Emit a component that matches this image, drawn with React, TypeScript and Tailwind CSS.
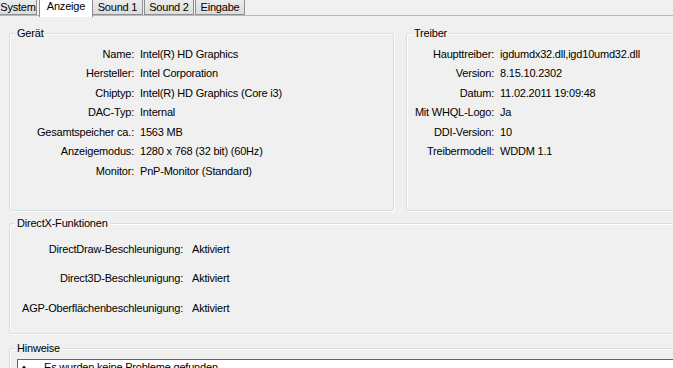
import React from "react";

const font = { fontFamily: '"Liberation Sans", Arial, sans-serif' };

const tabs = ["System", "Anzeige", "Sound 1", "Sound 2", "Eingabe"];

const deviceRows: [string, string][] = [
  ["Name:", "Intel(R) HD Graphics"],
  ["Hersteller:", "Intel Corporation"],
  ["Chiptyp:", "Intel(R) HD Graphics (Core i3)"],
  ["DAC-Typ:", "Internal"],
  ["Gesamtspeicher ca.:", "1563 MB"],
  ["Anzeigemodus:", "1280 x 768 (32 bit) (60Hz)"],
  ["Monitor:", "PnP-Monitor (Standard)"],
];

const driverRows: [string, string][] = [
  ["Haupttreiber:", "igdumdx32.dll,igd10umd32.dll"],
  ["Version:", "8.15.10.2302"],
  ["Datum:", "11.02.2011 19:09:48"],
  ["Mit WHQL-Logo:", "Ja"],
  ["DDI-Version:", "10"],
  ["Treibermodell:", "WDDM 1.1"],
];

const dxRows: [string, string][] = [
  ["DirectDraw-Beschleunigung:", "Aktiviert"],
  ["Direct3D-Beschleunigung:", "Aktiviert"],
  ["AGP-Oberflächenbeschleunigung:", "Aktiviert"],
];

// ─────────────── Group box ───────────────
const GroupBox = ({
  title,
  className,
  children,
}: {
  title: string;
  className: string;
  children?: React.ReactNode;
}) => (
  <div
    className={`relative rounded-[3px] border border-[#d5dfe5] shadow-[inset_1px_1px_0_#fff,1px_1px_0_#fff] ${className}`}
  >
    <span className="absolute -top-[8px] left-[5px] bg-[#f0f0f0] px-[2px] leading-[14px]">
      {title}
    </span>
    {children}
  </div>
);

const Rows = ({
  rows,
  labelWidth,
  gap,
  rowHeight,
}: {
  rows: [string, string][];
  labelWidth: string;
  gap: string;
  rowHeight: string;
}) => (
  <div className="flex flex-col">
    {rows.map(([label, value]) => (
      <div key={label} className={`flex items-center ${rowHeight}`}>
        <div className={`shrink-0 text-right ${labelWidth}`}>{label}</div>
        <div className={`whitespace-nowrap ${gap}`}>{value}</div>
      </div>
    ))}
  </div>
);

export default function App() {
  return (
    <div
      style={font}
      className="h-[368px] w-[673px] overflow-hidden bg-[#f0f0f0] text-[11px] tracking-[-0.2px] text-black"
    >
      {/* Tab strip */}
      <div className="flex h-[16px] items-start border-b border-[#b9b9b9]">
        {tabs.map((tab, i) =>
          tab === "Anzeige" ? (
            <div
              key={tab}
              className="relative z-10 ml-[2px] flex h-[17px] w-[54px] items-start justify-center border-x border-[#898c95] bg-white leading-[13px]"
            >
              {tab}
            </div>
          ) : (
            <div
              key={tab}
              className={`flex h-[15px] items-center justify-center border-r border-b border-[#8e8f8f] bg-gradient-to-b from-[#ececec] to-[#dcdcdc] pt-[1px] leading-[13px] ${
                i === 0 ? "-ml-px w-[38px] border-l" : "w-[50px]"
              } ${i > 2 ? "ml-[1px] border-l" : ""}`}
            >
              {tab}
            </div>
          ),
        )}
      </div>

      {/* Panel */}
      <div className="flex flex-col pl-[9px]">
        <div className="mt-[17px] flex gap-[12px]">
          <GroupBox title="Gerät" className="h-[178px] w-[385px] shrink-0 pt-[10px]">
            <Rows
              rows={deviceRows}
              labelWidth="w-[124px]"
              gap="pl-[6px]"
              rowHeight="h-[19.5px]"
            />
          </GroupBox>
          <GroupBox title="Treiber" className="h-[178px] w-[300px] shrink-0 pt-[10px]">
            <Rows
              rows={driverRows}
              labelWidth="w-[87px]"
              gap="pl-[6px]"
              rowHeight="h-[19.5px]"
            />
          </GroupBox>
        </div>

        <GroupBox title="DirectX-Funktionen" className="mt-[12px] h-[111px] w-[700px] pt-[10px]">
          <Rows
            rows={dxRows}
            labelWidth="w-[173px]"
            gap="pl-[9px]"
            rowHeight="h-[29.5px]"
          />
        </GroupBox>

        <GroupBox title="Hinweise" className="mt-[14px] h-[60px] w-[700px] pl-[7px] pt-[10px]">
          <div className="h-[40px] border border-[#646464] bg-white pl-[4px] pt-[1px]">
            <div className="flex items-center leading-[13px]">
              <span className="w-[22px]">•</span>
              <span>Es wurden keine Probleme gefunden.</span>
            </div>
          </div>
        </GroupBox>
      </div>
    </div>
  );
}
